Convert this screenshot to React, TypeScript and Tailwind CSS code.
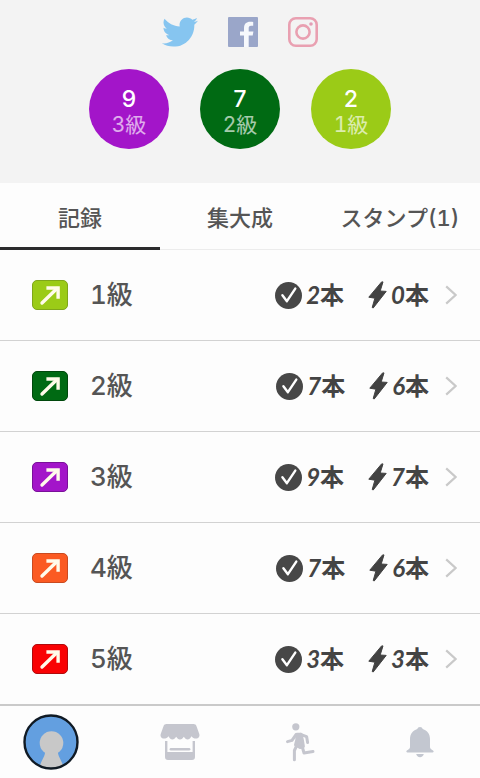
import { FaTwitter } from "react-icons/fa"

interface Grade {
  level: number
  color: string
  border: string
  done: number
  flash: number
}

const GRADES: Grade[] = [
  { level: 1, color: "bg-[#9bcb17]", border: "border-[#7fa61a]", done: 2, flash: 0 },
  { level: 2, color: "bg-[#006a13]", border: "border-[#00480c]", done: 7, flash: 6 },
  { level: 3, color: "bg-[#a315c9]", border: "border-[#7a1099]", done: 9, flash: 7 },
  { level: 4, color: "bg-[#fb5a22]", border: "border-[#c94a20]", done: 7, flash: 6 },
  { level: 5, color: "bg-[#f90204]", border: "border-[#b00a0c]", done: 3, flash: 3 },
]

const TOP_GRADES = [GRADES[2], GRADES[1], GRADES[0]]

const TABS = ["記録", "集大成", "スタンプ(1)"]

function FacebookIcon() {
  return (
    <svg className="w-[30px] h-[30px]" viewBox="0 0 30 30">
      <rect width="30" height="30" rx="1" fill="#9aa6c9" />
      <path
        d="M16 30V18.6h-4v-4.2h4v-3.2c0-4.3 2.4-6.4 6.2-6.4 1.4 0 2.4.1 3 .2v3.8h-2.1c-2 0-2.4 1-2.4 2.4v3.2h4.7l-.7 4.2h-4V30z"
        fill="#f6f8fc"
      />
    </svg>
  )
}

function InstagramIcon() {
  return (
    <svg className="w-[30px] h-[30px]" viewBox="0 0 30 30" fill="none" stroke="#e9a0b1" strokeWidth="2.6">
      <rect x="1.3" y="1.3" width="27.4" height="27.4" rx="6.5" />
      <circle cx="15" cy="15" r="6.6" />
      <circle cx="23" cy="7" r="1.8" fill="#e39db5" stroke="none" />
    </svg>
  )
}

function ArrowIcon() {
  return (
    <svg className="w-[34px] h-7" viewBox="0 0 34 28" fill="none" stroke="#fffbea" strokeWidth="3.4">
      <path d="M9 22 24 7.6" strokeLinecap="round" />
      <path d="M13.4 7h11.7v10.8" />
    </svg>
  )
}

function CheckIcon() {
  return (
    <svg className="w-[27px] h-[27px]" viewBox="0 0 27 27">
      <circle cx="13.5" cy="13.5" r="13.5" fill="#474747" />
      <path d="m7.4 13.2 4.5 6 8.4-12.6" fill="none" stroke="#fff" strokeWidth="2.4" strokeLinecap="round" strokeLinejoin="round" />
    </svg>
  )
}

function BoltIcon() {
  return (
    <svg className="w-[19px] h-7" viewBox="0 0 19 28">
      <path
        d="M13.6.9 15 .9 12.2 10l6 .4L5.2 27l-1-.5 2.7-9.300L.8 16.200z"
        fill="#424242"
        stroke="#424242"
        strokeLinejoin="round"
      />
    </svg>
  )
}

function ChevronIcon() {
  return (
    <svg className="w-3 h-5" viewBox="0 0 12 20" fill="none" stroke="#c9c9c9" strokeWidth="2.2">
      <path d="m1.2 1.4 9.4 8.6-9.4 8.6" />
    </svg>
  )
}

function AvatarIcon() {
  return (
    <svg className="w-14 h-14" viewBox="0 0 56 56">
      <clipPath id="avatar">
        <circle cx="28" cy="28" r="26.5" />
      </clipPath>
      <circle cx="28" cy="28" r="26.5" fill="#639fe0" />
      <g clipPath="url(#avatar)" fill="#c8c8c8">
        <circle cx="28.5" cy="29" r="11.8" />
        <path d="M22 37c.6 6-4.5 9-6 19h25c-1.4-10-6.6-13-6-19z" />
      </g>
      <circle cx="28" cy="28" r="26.5" fill="none" stroke="#101a24" strokeWidth="2.4" />
    </svg>
  )
}

function StoreIcon() {
  return (
    <svg className="w-10 h-9" viewBox="0 0 40 36" fill="#c5c6ce">
      <path d="M6.5 0h27c1.5 0 2.6.8 3 2.2L39.3 10c.7 2.600-.8 4.600-3.300 4.600-2 0-3.400-.8-4.600-2.400-1 2.200-2.400 3.200-3.800 3.200s-2.800-1-3.800-2.600c-1 1.600-2.200 2.600-3.800 2.600s-2.800-1-3.800-2.600c-1 1.600-2.400 2.600-3.800 2.600s-2.800-1-3.800-3.200c-1.200 1.600-2.600 2.400-4.600 2.400C1.500 14.600 0 12.600.7 10l2.800-7.800C3.900.8 5 0 6.5 0z" />
      <path d="M5 17h2.400v11h25.200V17H35v16c0 1.900-1.100 3-3 3H8c-1.900 0-3-1.100-3-3z" />
      <rect x="9.6" y="24" width="20.8" height="2.6" rx="1.3" />
    </svg>
  )
}

function RunnerIcon() {
  return (
    <svg className="w-[30px] h-10" viewBox="0 0 30 40" fill="none" stroke="#c5c6ce" strokeWidth="3" strokeLinecap="round" strokeLinejoin="round">
      <circle cx="10.8" cy="4.8" r="3.6" fill="#c5c6ce" stroke="none" />
      <path d="M2.5 19.6 7 18.4 11 12.6" />
      <path d="M15.5 12.4 21.600 14.600 22.600 20.400" />
      <path d="M12 12.200h4l1.400 5.800 1 6.500-3.400 1-4.500-2.500 1.300-5z" fill="#c5c6ce" />
      <path d="M11.800 23.500 9.400 28.500v9.200" />
      <path d="m17.200 24.500 1.800 6.500 9-1.400" />
    </svg>
  )
}

function BellIcon() {
  return (
    <svg className="w-7 h-8" viewBox="0 0 28 32" fill="#c3c7d0">
      <path d="M14 1c1.400 0 2.400.8 2.700 2C21.300 4.400 24 8.200 24 13v8c0 2.400 3 2.800 3.600 4.300.2.7-.2 1.200-1 1.200H1.400c-.8 0-1.200-.5-1-1.200C1 23.800 4 23.400 4 21v-8c0-4.800 2.700-8.600 7.300-10C11.600 1.800 12.600 1 14 1z" />
      <path d="M10.200 28h7.600c-.4 1.900-1.900 3.200-3.800 3.200s-3.400-1.300-3.800-3.200z" />
    </svg>
  )
}

function Count({ value }: { value: number }) {
  return (
    <span className="text-2xl leading-8 font-bold text-[#444]">
      <span className="font-['Lato'] italic">{value}</span>
      本
    </span>
  )
}

function GradeRow({ grade }: { grade: Grade }) {
  return (
    <li className="border-b border-[#d2d2d2] last:border-b-0">
      <button className="flex items-center w-full h-[90px] pl-8 pr-[23px]">
        <span className={`rounded-[5px] border ${grade.color} ${grade.border}`}>
          <ArrowIcon />
        </span>
        <span className="ml-[22px] text-[26px] leading-8 font-medium text-[#555]">{grade.level}級</span>
        <span className="ml-auto flex items-center gap-1">
          <CheckIcon />
          <Count value={grade.done} />
        </span>
        <span className="ml-6 flex items-center gap-1">
          <BoltIcon />
          <Count value={grade.flash} />
        </span>
        <span className="ml-4">
          <ChevronIcon />
        </span>
      </button>
    </li>
  )
}

export default function App() {
  return (
    <div className="min-h-screen flex flex-col bg-[#fdfdfd] tabular-nums font-['Inter','Noto_Sans_CJK_JP',sans-serif]">
      <header className="bg-[#f3f3f3] pt-[14px] pb-[34px]">
        <div className="flex items-center justify-center gap-[30px]">
          <a href="#twitter" aria-label="Twitter">
            <FaTwitter className="w-9 h-9 text-[#86c5f0]" />
          </a>
          <a href="#facebook" aria-label="Facebook">
            <FacebookIcon />
          </a>
          <a href="#instagram" aria-label="Instagram">
            <InstagramIcon />
          </a>
        </div>
        <div className="mt-[19px] flex justify-center gap-[31px]">
          {TOP_GRADES.map((g) => (
            <div
              key={g.level}
              className={`w-20 h-20 pt-1.5 rounded-full flex flex-col items-center justify-center text-white ${g.color}`}
            >
              <span className="text-[23px] leading-[26px] font-medium">{g.done}</span>
              <span className="text-[21px] leading-[26px] text-white/65">{g.level}級</span>
            </div>
          ))}
        </div>
      </header>

      <nav className="grid grid-cols-3 border-b border-[#ececec]">
        {TABS.map((tab, i) => (
          <button
            key={tab}
            className={`h-[67px] -mb-px pt-1.5 border-b-3 text-[22px] leading-8 font-medium text-[#555] whitespace-nowrap ${
              i === 0 ? "border-[#2b2b2d]" : "border-transparent"
            }`}
          >
            {tab}
          </button>
        ))}
      </nav>

      <ul className="flex-1">
        {GRADES.map((g) => (
          <GradeRow key={g.level} grade={g} />
        ))}
      </ul>

      <nav className="grid grid-cols-4 items-center justify-items-center h-[74px] border-t-2 border-[#cacaca]">
        <button aria-label="プロフィール" className="mr-[18px]">
          <AvatarIcon />
        </button>
        <button aria-label="ジム">
          <StoreIcon />
        </button>
        <button aria-label="アクティビティ">
          <RunnerIcon />
        </button>
        <button aria-label="お知らせ">
          <BellIcon />
        </button>
      </nav>
    </div>
  )
}
